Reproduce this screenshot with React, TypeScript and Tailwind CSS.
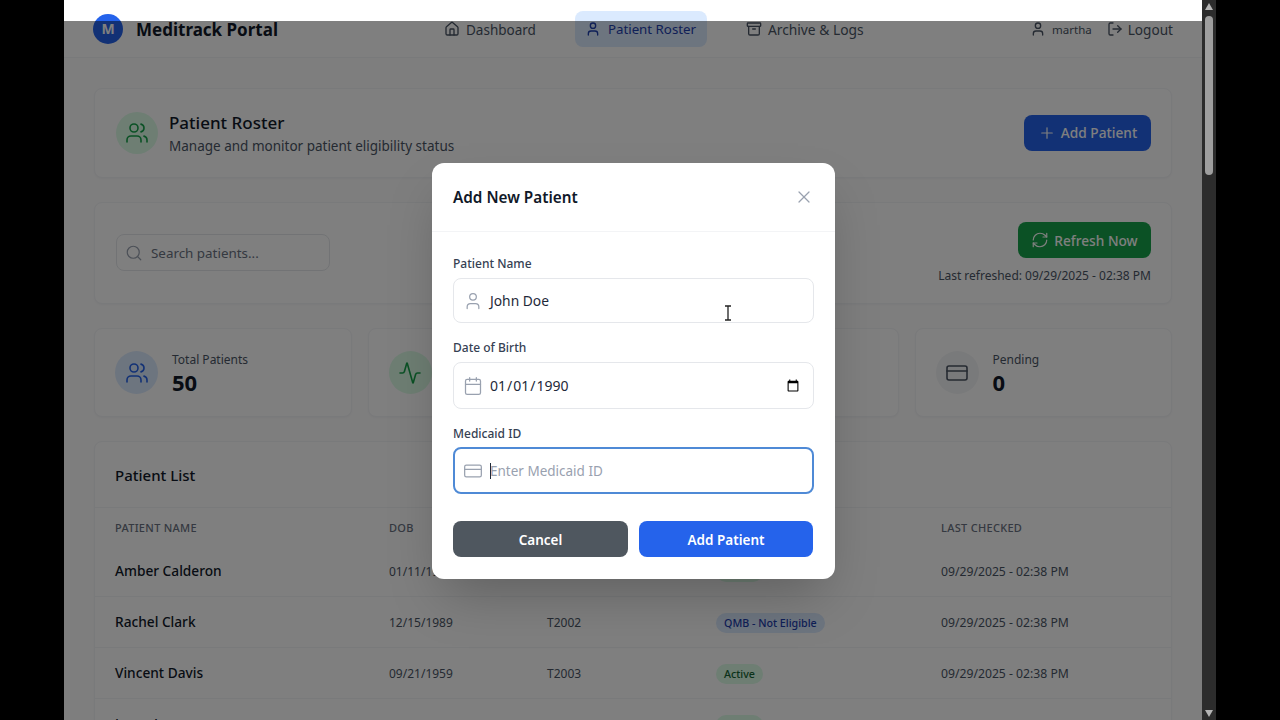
import React from "react";
import {
  Activity,
  Archive,
  Calendar,
  CreditCard,
  House,
  LogOut,
  Plus,
  RefreshCw,
  Search,
  User,
  Users,
  X,
} from "lucide-react";

const rows = [
  { name: "Amber Calderon", dob: "01/11/1975", id: "T2001", status: "Active", tone: "green" },
  { name: "Rachel Clark", dob: "12/15/1989", id: "T2002", status: "QMB - Not Eligible", tone: "blue" },
  { name: "Vincent Davis", dob: "09/21/1959", id: "T2003", status: "Active", tone: "green" },
  { name: "Jason Lee", dob: "03/08/1968", id: "T2004", status: "Active", tone: "green" },
];

const stats = [
  { label: "Total Patients", value: "50", bg: "bg-[#dbeafe]", color: "text-[#2563eb]", Icon: Users },
  { label: "Active", value: "38", bg: "bg-[#dcfce7]", color: "text-[#16a34a]", Icon: Activity },
  { label: "Not Eligible", value: "12", bg: "bg-[#fee2e2]", color: "text-[#dc2626]", Icon: X },
  { label: "Pending", value: "0", bg: "bg-[#f3f4f6]", color: "text-[#4b5563]", Icon: CreditCard },
];

const cardClass = "bg-white rounded-lg border border-gray-100 shadow-[0_1px_2px_rgba(0,0,0,0.03)]";

const App = () => {
  return (
    <div
      className="flex h-[720px] w-[1280px] overflow-hidden bg-black pl-16"
      style={{ fontFamily: '"Noto Sans", "Open Sans", sans-serif' }}
    >
      {/* page */}
      <div className="relative h-[720px] w-[1138px] overflow-hidden bg-[#fcfcfd]">
        <div className="flex h-[58px] items-center border-b border-gray-100 bg-white pl-[29px] pr-[29px] pt-[1px]">
          <div className="flex w-[339px] items-center gap-[13px]">
            <div className="flex h-[30px] w-[30px] items-center justify-center rounded-full bg-[#2563eb] text-sm font-bold text-white">
              M
            </div>
            <span className="pt-[1px] text-[17px] font-bold text-gray-900">Meditrack Portal</span>
          </div>
          <div className="flex items-center">
            <div className="flex items-center gap-[6px] px-3 text-[13.5px] text-gray-600">
              <House size={16} />
              <span className="pt-[2px]">Dashboard</span>
            </div>
            <div className="ml-[27px] flex h-[36px] w-[132px] items-center gap-[7px] rounded-lg bg-[#dbeafe] pl-[10px] text-[13.3px] text-[#1e40af]">
              <User size={16} />
              <span className="pt-[2px]">Patient Roster</span>
            </div>
            <div className="ml-[27px] flex items-center gap-[6px] px-3 text-[13.8px] text-gray-600">
              <Archive size={16} />
              <span className="pt-[2px]">Archive &amp; Logs</span>
            </div>
          </div>
          <div className="ml-auto flex items-center gap-[15px] text-gray-600">
            <div className="flex items-center gap-[6px] text-[11.5px]">
              <User size={16} />
              <span className="pt-[2px]">martha</span>
            </div>
            <div className="flex items-center gap-[5px] text-[13.6px]">
              <LogOut size={16} />
              <span className="pt-[2px]">Logout</span>
            </div>
          </div>
        </div>

        <div className="flex flex-col gap-6 px-[30px] pt-[30px]">
          <div className={`${cardClass} flex h-[90px] items-center justify-between px-[20px]`}>
            <div className="ml-[1px] flex items-center gap-[11px]">
              <div className="flex h-[42px] w-[42px] items-center justify-center rounded-full bg-[#dcfce7] text-[#16a34a]">
                <Users size={24} strokeWidth={1.6} />
              </div>
              <div className="pt-[2px]">
                <div className="text-[17px] font-medium leading-[24px] text-gray-900">Patient Roster</div>
                <div className="text-[13.5px] leading-[22px] text-gray-600">Manage and monitor patient eligibility status</div>
              </div>
            </div>
            <button className="flex h-[36px] w-[127px] items-center justify-center gap-[5px] rounded-lg bg-[#2563eb] text-[13.7px] font-medium text-white">
              <Plus size={18} strokeWidth={1.6} />
              Add Patient
            </button>
          </div>

          <div className={`${cardClass} flex h-[102px] items-start justify-between px-[20px]`}>
            <div className="ml-[1px] mt-[31px] flex h-[37px] w-[214px] items-center gap-[8px] rounded-lg border border-gray-200 pl-[8px]">
              <Search size={18} strokeWidth={1.6} className="text-gray-400" />
              <span className="pt-[2px] text-[13.4px] text-gray-500">Search patients...</span>
            </div>
            <div className="mt-[19px] flex flex-col items-end">
              <button className="flex h-[36px] w-[133px] items-center justify-center gap-[5px] rounded-lg bg-[#16a34a] text-[13.7px] font-medium text-white">
                <RefreshCw size={18} strokeWidth={1.6} />
                <span className="pt-[2px]">Refresh Now</span>
              </button>
              <div className="mt-[9px] text-xs leading-[18px] text-gray-600">Last refreshed: 09/29/2025 - 02:38 PM</div>
            </div>
          </div>

          <div className="grid grid-cols-4 gap-4">
            {stats.map((s) => (
              <div key={s.label} className={`${cardClass} flex h-[89px] items-center gap-[14px] pl-[20px] pr-[21px]`}>
                <div className={`flex h-[43px] w-[43px] items-center justify-center rounded-full ${s.bg} ${s.color}`}>
                  <s.Icon size={24} strokeWidth={1.6} />
                </div>
                <div className="pt-[1px]">
                  <div className="text-xs leading-[18px] text-gray-600">{s.label}</div>
                  <div className="text-[22px] font-bold leading-[26px] text-gray-900">{s.value}</div>
                </div>
              </div>
            ))}
          </div>

          <div className={`${cardClass} h-[400px]`}>
            <div className="flex h-[66px] items-center border-b border-gray-100 px-[20px] pt-[2px] text-[15px] font-medium text-gray-900">
              Patient List
            </div>
            <div className="grid h-[38px] grid-cols-[274px_158px_169px_225px_1fr] items-center px-[20px] pt-[2px] text-[11px] font-medium tracking-[0.3px] text-gray-500">
              <div>PATIENT NAME</div>
              <div>DOB</div>
              <div>MEDICAID ID</div>
              <div>STATUS</div>
              <div>LAST CHECKED</div>
            </div>
            {rows.map((r) => (
              <div
                key={r.name}
                className="grid h-[51px] grid-cols-[274px_158px_169px_225px_1fr] items-center border-b border-gray-100 px-[20px] pt-[2px] text-xs text-gray-600"
              >
                <div className="pb-[1px] text-[13.7px] font-medium text-gray-900">{r.name}</div>
                <div>{r.dob}</div>
                <div>{r.id}</div>
                <div>
                  <span
                    className={`inline-block rounded-full px-2 py-[3px] text-[10.7px] font-medium ${
                      r.tone === "green" ? "bg-[#dcfce7] text-[#166534]" : "bg-[#dbeafe] text-[#1e40af]"
                    }`}
                  >
                    {r.status}
                  </span>
                </div>
                <div className="text-[12.2px]">09/29/2025 - 02:38 PM</div>
              </div>
            ))}
          </div>
        </div>

        {/* dim layer behind the dialog */}
        <div className="absolute inset-x-0 bottom-0 top-[21px] bg-black/50" />

        {/* dialog */}
        <div className="absolute left-[368px] top-[163px] h-[416px] w-[403px] rounded-xl bg-white shadow-2xl">
          <div className="flex h-[69px] items-center justify-between border-b border-gray-100 pl-[21px] pr-[21px]">
            <span className="text-[15.3px] font-semibold text-gray-900">Add New Patient</span>
            <X size={20} strokeWidth={1.5} className="text-gray-400" />
          </div>
          <div className="px-[21px] pt-[22px]">
            <label className="block text-xs font-medium leading-[20px] text-gray-700">Patient Name</label>
            <div className="mt-[4px] flex h-[45px] items-center gap-[7px] rounded-lg border border-gray-200 pl-[9px] pr-3">
              <User size={20} strokeWidth={1.5} className="text-gray-400" />
              <span className="pt-[2px] text-[13.8px] text-gray-800">John Doe</span>
            </div>
            <label className="mt-[15px] block text-xs font-medium leading-[20px] text-gray-700">Date of Birth</label>
            <div className="mt-[4px] flex h-[47px] items-center gap-[6px] rounded-lg border border-gray-200 pl-[9px] pr-[11px]">
              <Calendar size={20} strokeWidth={1.5} className="text-gray-400" />
              <input
                type="date"
                defaultValue="1990-01-01"
                className="min-w-0 flex-1 bg-transparent text-sm text-gray-800 outline-none"
              />
            </div>
            <label className="mt-[15px] block text-xs font-medium leading-[20px] text-gray-700">Medicaid ID</label>
            <div className="relative mt-[3px] flex h-[47px] items-center gap-[7px] rounded-lg border-2 border-[#4f8ad6] pl-[8px] pr-3">
              <CreditCard size={20} strokeWidth={1.5} className="text-gray-400" />
              <input
                placeholder="Enter Medicaid ID"
                className="min-w-0 flex-1 bg-transparent pt-[2px] text-[13.5px] outline-none placeholder:text-gray-400"
              />
              <span className="absolute left-[35px] top-[14px] h-[16px] w-px bg-gray-800" />
            </div>
            <div className="mt-[27px] flex gap-[11px]">
              <button className="h-[36px] w-[175px] rounded-lg bg-[#4f575f] pt-[2px] text-[13.5px] font-semibold text-white">Cancel</button>
              <button className="h-[36px] w-[174px] rounded-lg bg-[#2563eb] pt-[2px] text-[13.5px] font-semibold text-white">Add Patient</button>
            </div>
          </div>
        </div>

        {/* mouse pointer */}
        <svg className="absolute left-[659px] top-[305px]" width="10" height="16" viewBox="0 0 10 16">
          <path d="M2 1h6M2 15h6M5 1v14" fill="none" stroke="#222" strokeWidth="1.3" />
        </svg>
      </div>

      {/* browser scrollbar */}
      <div className="flex h-[720px] w-[14px] flex-col items-center justify-between bg-[#2c2c2c] pb-[3px] pt-[3px]">
        <div className="flex flex-col items-center gap-[6px]">
          <svg width="8" height="7" viewBox="0 0 8 7">
            <path d="M4 0l4 7H0z" fill="#b5b5b5" />
          </svg>
          <div className="h-[159px] w-[8px] rounded-full bg-[#9f9f9f]" />
        </div>
        <svg width="8" height="7" viewBox="0 0 8 7">
          <path d="M4 7L0 0h8z" fill="#b5b5b5" />
        </svg>
      </div>
    </div>
  );
};

export default App;
